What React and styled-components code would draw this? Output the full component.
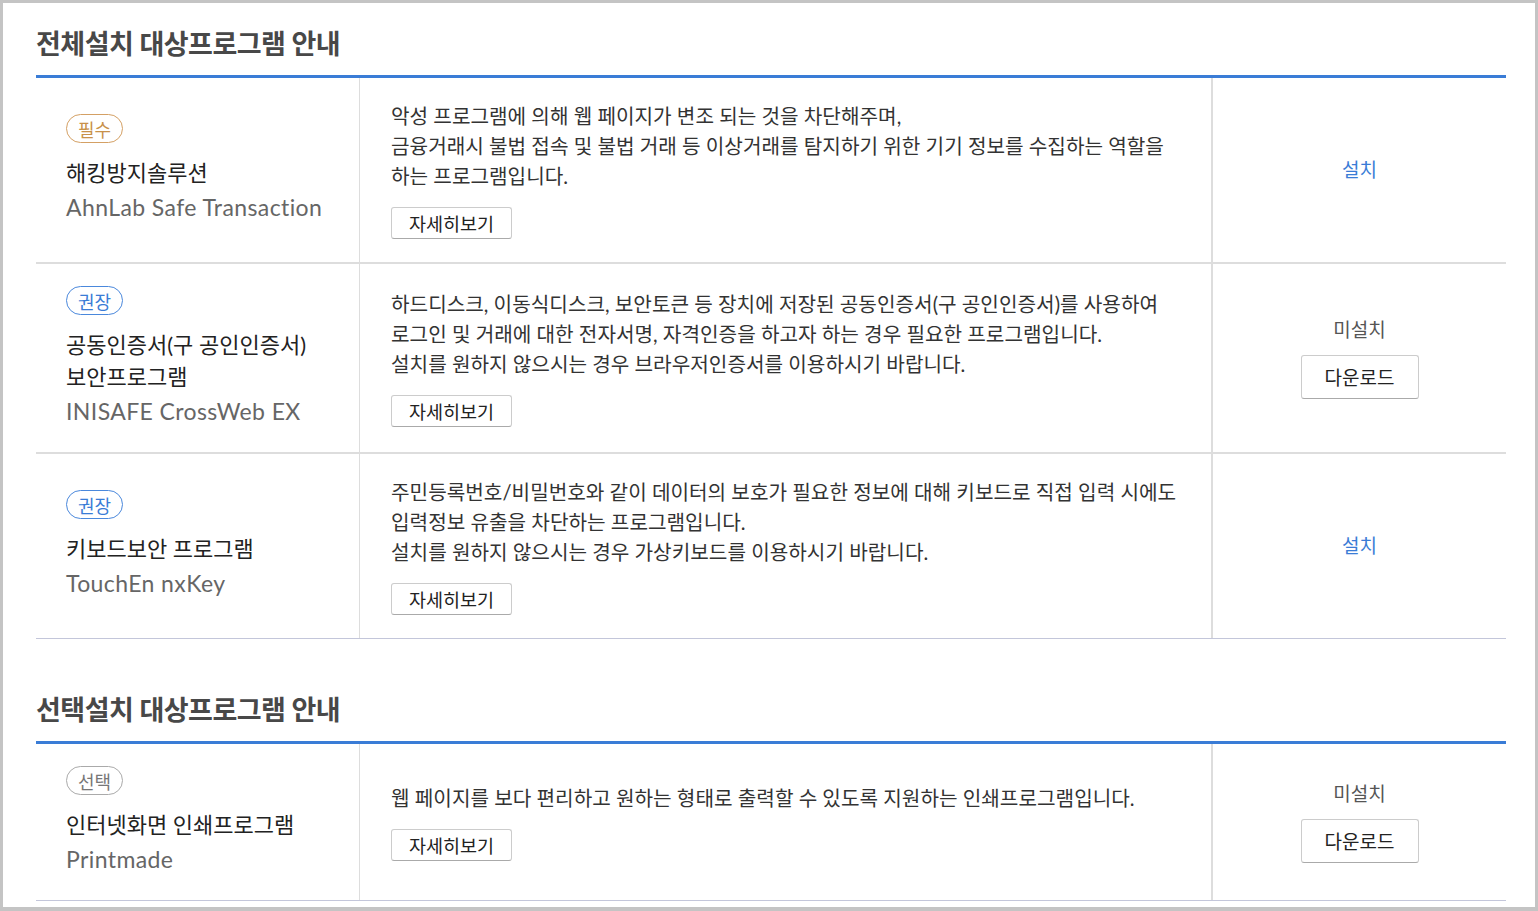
import React from "react";
import styled, { createGlobalStyle, css } from "styled-components";

const GlobalStyle = createGlobalStyle`
  html, body {
    margin: 0;
    padding: 0;
    background: #fff;
  }
  body {
    font-family: Lato, "Noto Sans CJK KR", sans-serif;
    color: #333;
  }
`;

const Frame = styled.div`
  box-sizing: border-box;
  width: 1538px;
  height: 911px;
  overflow: hidden;
  border: 3px solid #c4c4c4;
  border-bottom-width: 4px;
  padding: 0 29px 0 33px;
`;

const Section = styled.section`
  padding-top: ${(p) => (p.$first ? "23px" : "53px")};
`;

const Title = styled.h2`
  margin: 0 0 13px;
  font-size: 27px;
  line-height: 36px;
  font-weight: 700;
  color: #484848;
  letter-spacing: -0.5px;
`;

const Table = styled.div`
  border-top: 3px solid #3a7cd6;
`;

const Row = styled.div`
  display: grid;
  grid-template-columns: 324px 1fr 295px;
  border-bottom: ${(p) => (p.$last ? "1px solid #c3c6da" : "2px solid #ddd")};
`;

const Cell = styled.div`
  display: flex;
  flex-direction: column;
  justify-content: center;
  padding: 23px 0;
`;

const NameCell = styled(Cell)`
  border-right: 1px solid #ddd;
  padding: 22px 0 22px 30px;
  align-items: flex-start;
`;

const DescCell = styled(Cell)`
  padding-left: 31px;
  align-items: flex-start;
`;

const ActionCell = styled(Cell)`
  border-left: 2px solid #ddd;
  align-items: center;
`;

const badgeColors = {
  required: css`
    color: #c8914a;
    border-color: #d4a064;
  `,
  recommend: css`
    color: #3a7cd6;
    border-color: #4a88dc;
  `,
  optional: css`
    color: #777;
    border-color: #aaa;
  `,
};

const Badge = styled.span`
  display: inline-flex;
  align-items: center;
  justify-content: center;
  box-sizing: border-box;
  height: 29px;
  padding: 0 11px;
  border: 1px solid;
  border-radius: 15px;
  font-size: 18px;
  margin-bottom: 14px;
  ${(p) => badgeColors[p.$kind]}
`;

const Name = styled.div`
  font-size: 22px;
  line-height: 32px;
  color: #222;
`;

const EngName = styled.div`
  font-size: 23px;
  line-height: 37px;
  letter-spacing: 0.4px;
  color: #666;
`;

const Desc = styled.p`
  margin: 0 0 16px;
  font-size: 20.2px;
  line-height: 30px;
  color: #333;
  white-space: nowrap;
`;

const Button = styled.button`
  box-sizing: border-box;
  font-family: inherit;
  background: #fff;
  color: #222;
  border: 1px solid #ccc;
  border-bottom-color: #aaa;
  border-radius: 3px;
  cursor: pointer;
  padding: 0;
  ${(p) =>
    p.$big
      ? css`
          width: 118px;
          height: 44px;
          font-size: 19px;
        `
      : css`
          width: 121px;
          height: 32px;
          font-size: 18.5px;
        `}
`;

const InstallLink = styled.a`
  font-size: 19px;
  line-height: 24px;
  color: #3a7cd6;
  text-decoration: none;
`;

const Status = styled.div`
  font-size: 19px;
  line-height: 24px;
  color: #555;
  margin-bottom: 13px;
`;

const badgeLabel = { required: "필수", recommend: "권장", optional: "선택" };

function ProgramRow({ item, last }) {
  return (
    <Row $last={last}>
      <NameCell>
        <Badge $kind={item.kind}>{badgeLabel[item.kind]}</Badge>
        {item.name.map((n) => (
          <Name key={n}>{n}</Name>
        ))}
        <EngName>{item.eng}</EngName>
      </NameCell>
      <DescCell>
        <Desc>
          {item.desc.map((line, i) => (
            <React.Fragment key={i}>
              {i > 0 && <br />}
              {line}
            </React.Fragment>
          ))}
        </Desc>
        <Button>자세히보기</Button>
      </DescCell>
      <ActionCell>
        {item.installed ? (
          <InstallLink href="#">설치</InstallLink>
        ) : (
          <>
            <Status>미설치</Status>
            <Button $big>다운로드</Button>
          </>
        )}
      </ActionCell>
    </Row>
  );
}

const required = [
  {
    kind: "required",
    name: ["해킹방지솔루션"],
    eng: "AhnLab Safe Transaction",
    desc: [
      "악성 프로그램에 의해 웹 페이지가 변조 되는 것을 차단해주며,",
      "금융거래시 불법 접속 및 불법 거래 등 이상거래를 탐지하기 위한 기기 정보를 수집하는 역할을",
      "하는 프로그램입니다.",
    ],
    installed: true,
  },
  {
    kind: "recommend",
    name: ["공동인증서(구 공인인증서)", "보안프로그램"],
    eng: "INISAFE CrossWeb EX",
    desc: [
      "하드디스크, 이동식디스크, 보안토큰 등 장치에 저장된 공동인증서(구 공인인증서)를 사용하여",
      "로그인 및 거래에 대한 전자서명, 자격인증을 하고자 하는 경우 필요한 프로그램입니다.",
      "설치를 원하지 않으시는 경우 브라우저인증서를 이용하시기 바랍니다.",
    ],
    installed: false,
  },
  {
    kind: "recommend",
    name: ["키보드보안 프로그램"],
    eng: "TouchEn nxKey",
    desc: [
      "주민등록번호/비밀번호와 같이 데이터의 보호가 필요한 정보에 대해 키보드로 직접 입력 시에도",
      "입력정보 유출을 차단하는 프로그램입니다.",
      "설치를 원하지 않으시는 경우 가상키보드를 이용하시기 바랍니다.",
    ],
    installed: true,
  },
];

const optional = [
  {
    kind: "optional",
    name: ["인터넷화면 인쇄프로그램"],
    eng: "Printmade",
    desc: ["웹 페이지를 보다 편리하고 원하는 형태로 출력할 수 있도록 지원하는 인쇄프로그램입니다."],
    installed: false,
  },
];

export default function App() {
  return (
    <>
      <GlobalStyle />
      <Frame>
        <Section $first>
          <Title>전체설치 대상프로그램 안내</Title>
          <Table>
            {required.map((item, i) => (
              <ProgramRow key={item.eng} item={item} last={i === required.length - 1} />
            ))}
          </Table>
        </Section>
        <Section>
          <Title>선택설치 대상프로그램 안내</Title>
          <Table>
            {optional.map((item, i) => (
              <ProgramRow key={item.eng} item={item} last={i === optional.length - 1} />
            ))}
          </Table>
        </Section>
      </Frame>
    </>
  );
}
